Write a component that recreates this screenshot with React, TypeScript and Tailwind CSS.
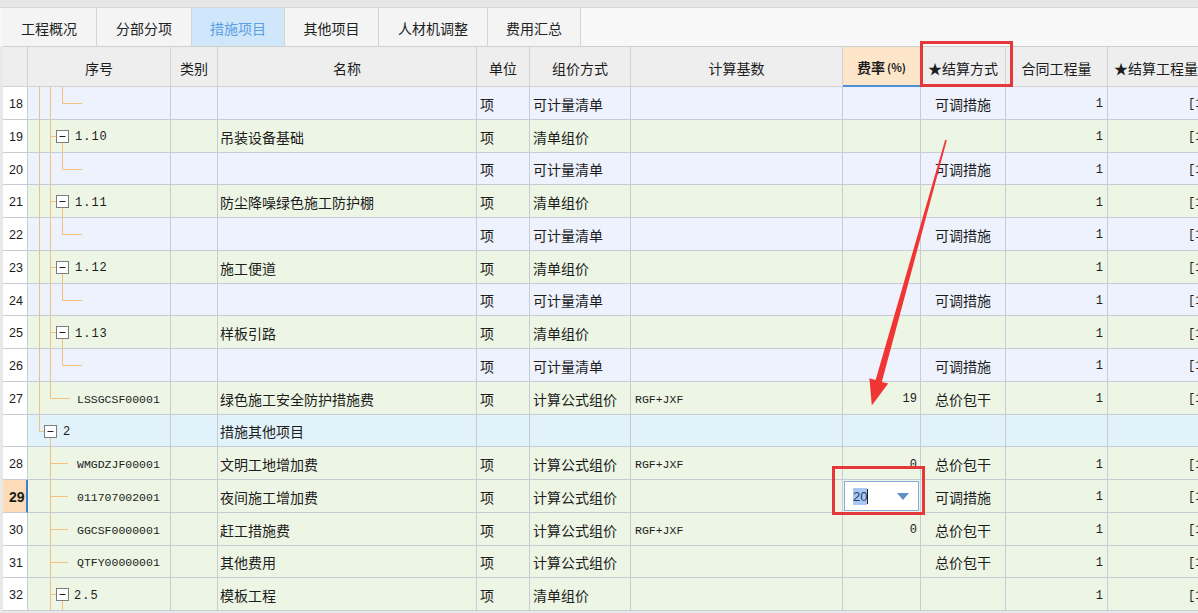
import React from "react";

type TreeKind = "leaf1" | "node1" | "last1" | "node0" | "leaf2" | "node2";

interface Row {
  num: string;
  tree: TreeKind;
  code: string;
  name: string;
  unit: string;
  method: string;
  base: string;
  rate: string;
  settle: string;
  qty: string;
  sqty: string;
  bg: string;
  edit?: boolean;
  active?: boolean;
}

const LAV = "bg-[#edf2fc]";
const GRN = "bg-[#edf5e4]";
const CYN = "bg-[#e2f2fb]";

const rows: Row[] = [
  { num: "18", tree: "leaf1", code: "", name: "", unit: "项", method: "可计量清单", base: "", rate: "", settle: "可调措施", qty: "1", sqty: "[1]", bg: LAV },
  { num: "19", tree: "node1", code: "1.10", name: "吊装设备基础", unit: "项", method: "清单组价", base: "", rate: "", settle: "", qty: "1", sqty: "[1]", bg: GRN },
  { num: "20", tree: "leaf1", code: "", name: "", unit: "项", method: "可计量清单", base: "", rate: "", settle: "可调措施", qty: "1", sqty: "[1]", bg: LAV },
  { num: "21", tree: "node1", code: "1.11", name: "防尘降噪绿色施工防护棚", unit: "项", method: "清单组价", base: "", rate: "", settle: "", qty: "1", sqty: "[1]", bg: GRN },
  { num: "22", tree: "leaf1", code: "", name: "", unit: "项", method: "可计量清单", base: "", rate: "", settle: "可调措施", qty: "1", sqty: "[1]", bg: LAV },
  { num: "23", tree: "node1", code: "1.12", name: "施工便道", unit: "项", method: "清单组价", base: "", rate: "", settle: "", qty: "1", sqty: "[1]", bg: GRN },
  { num: "24", tree: "leaf1", code: "", name: "", unit: "项", method: "可计量清单", base: "", rate: "", settle: "可调措施", qty: "1", sqty: "[1]", bg: LAV },
  { num: "25", tree: "node1", code: "1.13", name: "样板引路", unit: "项", method: "清单组价", base: "", rate: "", settle: "", qty: "1", sqty: "[1]", bg: GRN },
  { num: "26", tree: "leaf1", code: "", name: "", unit: "项", method: "可计量清单", base: "", rate: "", settle: "可调措施", qty: "1", sqty: "[1]", bg: LAV },
  { num: "27", tree: "last1", code: "LSSGCSF00001", name: "绿色施工安全防护措施费", unit: "项", method: "计算公式组价", base: "RGF+JXF", rate: "19", settle: "总价包干", qty: "1", sqty: "[1]", bg: GRN },
  { num: "", tree: "node0", code: "2", name: "措施其他项目", unit: "", method: "", base: "", rate: "", settle: "", qty: "", sqty: "", bg: CYN },
  { num: "28", tree: "leaf2", code: "WMGDZJF00001", name: "文明工地增加费", unit: "项", method: "计算公式组价", base: "RGF+JXF", rate: "0", settle: "总价包干", qty: "1", sqty: "[1]", bg: GRN },
  { num: "29", tree: "leaf2", code: "011707002001", name: "夜间施工增加费", unit: "项", method: "计算公式组价", base: "", rate: "20", settle: "可调措施", qty: "1", sqty: "[1]", bg: GRN, edit: true, active: true },
  { num: "30", tree: "leaf2", code: "GGCSF0000001", name: "赶工措施费", unit: "项", method: "计算公式组价", base: "RGF+JXF", rate: "0", settle: "总价包干", qty: "1", sqty: "[1]", bg: GRN },
  { num: "31", tree: "leaf2", code: "QTFY00000001", name: "其他费用", unit: "项", method: "计算公式组价", base: "", rate: "", settle: "总价包干", qty: "1", sqty: "[1]", bg: GRN },
  { num: "32", tree: "node2", code: "2.5", name: "模板工程", unit: "项", method: "清单组价", base: "", rate: "", settle: "", qty: "1", sqty: "[1]", bg: GRN },
];

const LC = "#f3c07f";
const L0 = 11.5;
const L1 = 22.5;
const L2 = 34.5;
const MID = 16.5;

function V({ x, y1, y2 }: { x: number; y1: number; y2: number }) {
  return <line x1={x} y1={y1} x2={x} y2={y2} stroke={LC} strokeWidth={1} />;
}
function H({ y, x1, x2 }: { y: number; x1: number; x2: number }) {
  return <line x1={x1} y1={y} x2={x2} y2={y} stroke={LC} strokeWidth={1} />;
}
function Box({ cx }: { cx: number }) {
  return (
    <g>
      <rect x={cx - 6} y={MID - 6} width={12} height={12} fill="#ffffff" stroke="#7d7d7d" strokeWidth={1} />
      <line x1={cx - 3} y1={MID} x2={cx + 3} y2={MID} stroke="#222" strokeWidth={1} />
    </g>
  );
}

function Tree({ kind }: { kind: TreeKind }) {
  let w = 60;
  let parts: React.ReactNode = null;
  switch (kind) {
    case "leaf1":
      w = 60;
      parts = (
        <>
          <V x={L0} y1={0} y2={33} />
          <V x={L1} y1={0} y2={33} />
          <V x={L2} y1={0} y2={MID} />
          <H y={MID} x1={L2} x2={54} />
        </>
      );
      break;
    case "node1":
      w = 47;
      parts = (
        <>
          <V x={L0} y1={0} y2={33} />
          <V x={L1} y1={0} y2={33} />
          <H y={MID} x1={L1} x2={L2 - 6} />
          <V x={L2} y1={MID + 6} y2={33} />
          <Box cx={L2} />
        </>
      );
      break;
    case "last1":
      w = 49;
      parts = (
        <>
          <V x={L0} y1={0} y2={33} />
          <V x={L1} y1={0} y2={MID} />
          <H y={MID} x1={L1} x2={42} />
        </>
      );
      break;
    case "node0":
      w = 35;
      parts = (
        <>
          <V x={L0} y1={0} y2={MID} />
          <H y={MID} x1={L0} x2={L1 - 6} />
          <V x={L1} y1={MID + 6} y2={33} />
          <Box cx={L1} />
        </>
      );
      break;
    case "leaf2":
      w = 49;
      parts = (
        <>
          <V x={L1} y1={0} y2={33} />
          <H y={MID} x1={L1} x2={40} />
        </>
      );
      break;
    case "node2":
      w = 46;
      parts = (
        <>
          <V x={L1} y1={0} y2={33} />
          <H y={MID} x1={L1} x2={L2 - 6} />
          <V x={L2} y1={MID + 6} y2={33} />
          <Box cx={L2} />
        </>
      );
      break;
  }
  return (
    <svg width={w} height={33} viewBox={`0 0 ${w} 33`} className="shrink-0 block">
      {parts}
    </svg>
  );
}

const COLS =
  "grid grid-cols-[25px_143px_47px_259px_53px_101px_212px_78px_85px_102px_112px]";
const CJK = "font-['Noto_Sans_CJK_SC','Noto_Sans',sans-serif]";
const MONO = "font-['Liberation_Mono',monospace]";
const CELL = "border-r border-b border-[#c6ccd6] flex items-center overflow-hidden whitespace-nowrap";
const TXT = "pt-[3px]";

const tabs = [
  { t: "工程概况", w: "w-[95px]" },
  { t: "分部分项", w: "w-[95px]" },
  { t: "措施项目", w: "w-[93px]", active: true },
  { t: "其他项目", w: "w-[94px]" },
  { t: "人材机调整", w: "w-[109px]" },
  { t: "费用汇总", w: "w-[93px]" },
];

const headers = [
  "",
  "序号",
  "类别",
  "名称",
  "单位",
  "组价方式",
  "计算基数",
  "rate",
  "★结算方式",
  "合同工程量",
  "★结算工程量",
];

export default function App() {
  return (
    <div className={`relative w-[1198px] h-[613px] overflow-hidden bg-[#e9e9e9] text-[#1c1c1c] ${CJK}`}>
      {/* tab bar */}
      <div className="h-[46px] flex flex-col">
        <div className="h-[7px] bg-[#e6e6e6]" />
        <div className="flex-1 flex bg-[#f8f8f8] border-t border-[#d6d6d6] pl-[2px]">
          {tabs.map((tb) => (
            <div
              key={tb.t}
              className={`${tb.w} h-full flex items-center justify-center border-r border-[#d4d4d4] text-[14px] leading-none pt-[2px] ${
                tb.active ? "bg-[#cfe6fb] text-[#5a9fe6]" : "bg-[#f4f4f4] text-[#222]"
              }`}
            >
              {tb.t}
            </div>
          ))}
        </div>
      </div>

      {/* table */}
      <div className="pl-[3px] bg-[#e9e9e9]">
        {/* header */}
        <div className={`${COLS} h-[41px] bg-[#eeeeee] border-t border-[#cfcfcf]`}>
          {headers.map((h, i) => {
            if (h === "rate") {
              return (
                <div
                  key={i}
                  className="border-r border-[#d2d2d2] border-b-2 border-b-[#4f8fd6] bg-[#fde5ca] flex items-center justify-center text-[14px] font-bold leading-none pt-[2px]"
                >
                  费率<span className="text-[11px] ml-[2px]">(%)</span>
                </div>
              );
            }
            return (
              <div
                key={i}
                className={`border-r border-b border-[#d2d2d2] flex items-center text-[14px] leading-none whitespace-nowrap overflow-hidden pt-[2px] ${
                  i === 10 ? "justify-start pl-[6px]" : "justify-center"
                }`}
              >
                {h}
              </div>
            );
          })}
        </div>

        {/* rows */}
        {rows.map((r, idx) => (
          <div key={idx} className={`${COLS} h-[32.75px]`}>
            <div
              className={`${CELL} ${TXT} pl-[6px] text-[12.5px] font-['Liberation_Sans',sans-serif] ${
                r.active ? "bg-[#fddcb8] font-bold text-[14px] border-r-2 border-r-[#3d7fd0]" : "bg-white"
              }`}
            >
              {r.num}
            </div>
            <div className={`${CELL} ${r.bg} items-stretch`}>
              <Tree kind={r.tree} />
              <span
                className={`flex items-center pt-[3px] ${MONO} ${
                  r.code.length > 4 ? "text-[11.5px]" : "text-[12px] tracking-[1px]"
                }`}
              >
                {r.code}
              </span>
            </div>
            <div className={`${CELL} ${r.bg}`} />
            <div className={`${CELL} ${TXT} ${r.bg} pl-[2px] text-[14px]`}>{r.name}</div>
            <div className={`${CELL} ${TXT} ${r.bg} pl-[3px] text-[14px]`}>{r.unit}</div>
            <div className={`${CELL} ${TXT} ${r.bg} pl-[3px] text-[14px]`}>{r.method}</div>
            <div className={`${CELL} ${TXT} ${r.bg} pl-[4px] text-[11.5px] ${MONO}`}>{r.base}</div>
            {r.edit ? (
              <div className={`${CELL} ${r.bg} p-[1px]`}>
                <div className="w-full h-full bg-white border border-[#86acd9] flex items-center pl-[8px] pr-[9px] pt-[2px]">
                  <span className="bg-[#aac8ef] text-[#1d3f78] text-[13px] leading-[17px] font-['Liberation_Sans',sans-serif]">
                    20
                  </span>
                  <span className="w-px h-[15px] bg-[#222]" />
                  <span className="flex-1" />
                  <svg width="12" height="8" viewBox="0 0 12 8">
                    <polygon points="0,0 12,0 6,7" fill="#5f8fc2" />
                  </svg>
                </div>
              </div>
            ) : (
              <div className={`${CELL} ${TXT} ${r.bg} justify-end pr-[3px] text-[12px] ${MONO}`}>{r.rate}</div>
            )}
            <div className={`${CELL} ${TXT} ${r.bg} justify-center text-[14px]`}>{r.settle}</div>
            <div className={`${CELL} ${TXT} ${r.bg} justify-end pr-[4px] text-[12px] ${MONO}`}>{r.qty}</div>
            <div className={`${CELL} ${TXT} ${r.bg} pl-[80px] text-[12px] ${MONO}`}>{r.sqty}</div>
          </div>
        ))}
      </div>

      {/* overlays: red highlight boxes */}
      <div className="absolute left-[920px] top-[41px] w-[93px] h-[46px] border-[3px] border-[#e5383b] pointer-events-none" />
      <div className="absolute left-[832px] top-[466px] w-[93px] h-[49px] border-[3px] border-[#e5383b] pointer-events-none" />

      {/* red arrow */}
      <svg className="absolute left-0 top-0 pointer-events-none" width="1198" height="613" viewBox="0 0 1198 613">
        <polygon
          points="946.8,140.2 881.8,381.9 888.2,383.6 871.8,405.5 869.4,378.3 875.6,380.1 945.2,139.8"
          fill="#f03535"
        />
      </svg>
    </div>
  );
}
